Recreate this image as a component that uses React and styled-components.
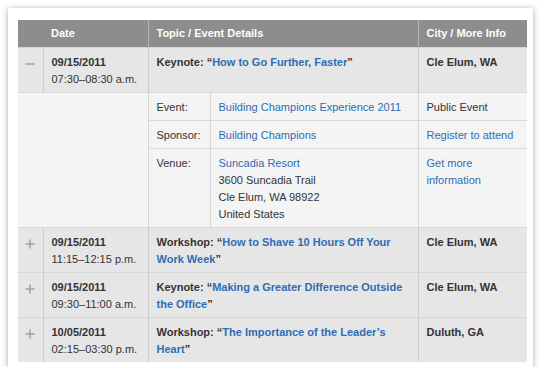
import React from 'react';
import styled, { createGlobalStyle } from 'styled-components';

const GlobalStyle = createGlobalStyle`
  html, body {
    margin: 0;
    padding: 0;
    background: #ffffff;
  }
  body {
    font-family: "Liberation Sans", Arial, Helvetica, sans-serif;
    color: #333333;
  }
`;

const Card = styled.div`
  margin: 8px 0 0 8px;
  width: 525px;
  box-sizing: border-box;
  padding: 12px 6px 5px 10px;
  background: #ffffff;
  box-shadow: 0 1px 6px rgba(0, 0, 0, 0.35);
`;

const Table = styled.table`
  width: 509px;
  table-layout: fixed;
  border-collapse: collapse;
  font-size: 11px;
  line-height: 17px;
`;

const HeadCell = styled.th`
  background: #8d8d8d;
  color: #ffffff;
  font-weight: bold;
  text-align: left;
  height: 27px;
  padding: 0 8px 0 ${(p) => (p.$indent ? '33px' : '8px')};
  border-left: 1px solid #b4b4b4;
  &:first-child {
    border-left: none;
  }
`;

const Cell = styled.td`
  background: #e6e6e6;
  vertical-align: top;
  padding: 6px 8px 4px;
  border-left: 1px solid #cdcdcd;
  border-top: 1px solid #d6d6d6;
  font-weight: ${(p) => (p.$bold ? 'bold' : 'normal')};
  &:first-child {
    border-left: none;
  }
`;

const ToggleCell = styled(Cell)`
  padding: 9px 0 0;
  text-align: center;
`;

const DetailCell = styled.td`
  background: #f4f4f4;
  vertical-align: top;
  padding: 6px 8px 4px;
  border-left: 1px solid #d6d6d6;
  border-top: 1px solid #d9d9d9;
`;

const BlankCell = styled.td`
  background: #f4f4f4;
  border-top: 1px solid #d9d9d9;
`;

const Link = styled.a`
  color: #2e6db4;
  text-decoration: none;
  font-weight: inherit;
`;

const Time = styled.div`
  font-weight: normal;
`;

function Toggle({ open }) {
  return (
    <svg width="10" height="10" viewBox="0 0 10 10">
      <line x1="0.5" y1="5" x2="9.5" y2="5" stroke="#9a9a9a" strokeWidth="1.4" />
      {!open && <line x1="5" y1="0.5" x2="5" y2="9.5" stroke="#9a9a9a" strokeWidth="1.4" />}
    </svg>
  );
}

const events = [
  {
    date: '09/15/2011',
    time: '07:30–08:30 a.m.',
    kind: 'Keynote',
    title: 'How to Go Further, Faster',
    city: 'Cle Elum, WA',
    open: true,
  },
  {
    date: '09/15/2011',
    time: '11:15–12:15 p.m.',
    kind: 'Workshop',
    title: 'How to Shave 10 Hours Off Your Work Week',
    city: 'Cle Elum, WA',
  },
  {
    date: '09/15/2011',
    time: '09:30–11:00 a.m.',
    kind: 'Keynote',
    title: 'Making a Greater Difference Outside the Office',
    city: 'Cle Elum, WA',
  },
  {
    date: '10/05/2011',
    time: '02:15–03:30 p.m.',
    kind: 'Workshop',
    title: 'The Importance of the Leader’s Heart',
    city: 'Duluth, GA',
  },
];

function EventRow({ event }) {
  return (
    <tr>
      <ToggleCell>
        <Toggle open={event.open} />
      </ToggleCell>
      <Cell $bold>
        {event.date}
        <Time>{event.time}</Time>
      </Cell>
      <Cell $bold colSpan={2}>
        {event.kind}: “<Link href="#">{event.title}</Link>”
      </Cell>
      <Cell $bold>{event.city}</Cell>
    </tr>
  );
}

function Details() {
  return (
    <>
      <tr>
        <BlankCell colSpan={2} rowSpan={3} />
        <DetailCell>Event:</DetailCell>
        <DetailCell>
          <Link href="#">Building Champions Experience 2011</Link>
        </DetailCell>
        <DetailCell>Public Event</DetailCell>
      </tr>
      <tr>
        <DetailCell>Sponsor:</DetailCell>
        <DetailCell>
          <Link href="#">Building Champions</Link>
        </DetailCell>
        <DetailCell>
          <Link href="#">Register to attend</Link>
        </DetailCell>
      </tr>
      <tr>
        <DetailCell>Venue:</DetailCell>
        <DetailCell>
          <Link href="#">Suncadia Resort</Link>
          <br />
          3600 Suncadia Trail
          <br />
          Cle Elum, WA 98922
          <br />
          United States
        </DetailCell>
        <DetailCell>
          <Link href="#">Get more information</Link>
        </DetailCell>
      </tr>
    </>
  );
}

export default function App() {
  return (
    <>
      <GlobalStyle />
      <Card>
        <Table>
          <colgroup>
            <col style={{ width: 25 }} />
            <col style={{ width: 105 }} />
            <col style={{ width: 62 }} />
            <col style={{ width: 208 }} />
            <col style={{ width: 109 }} />
          </colgroup>
          <thead>
            <tr>
              <HeadCell $indent colSpan={2}>Date</HeadCell>
              <HeadCell colSpan={2}>Topic / Event Details</HeadCell>
              <HeadCell>City / More Info</HeadCell>
            </tr>
          </thead>
          <tbody>
            {events.map((event, i) => (
              <React.Fragment key={i}>
                <EventRow event={event} />
                {event.open && <Details />}
              </React.Fragment>
            ))}
          </tbody>
        </Table>
      </Card>
    </>
  );
}
